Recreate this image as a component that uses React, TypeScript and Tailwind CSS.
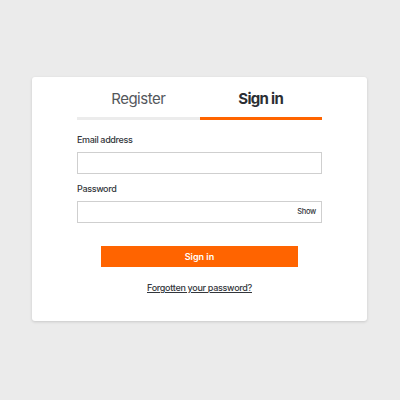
export default function App() {
  return (
    <div
      className="min-h-[400px] w-[400px] bg-[#ebebeb] pt-[77px] pl-[32px]"
      style={{ fontFamily: "Inter, 'Noto Sans', sans-serif" }}
    >
      <div className="flex h-[244px] w-[335px] flex-col rounded-[3px] bg-white px-[45px] pt-[12px] shadow-[0_1px_3px_rgba(0,0,0,0.15)]">
        {/* Tabs */}
        <div className="flex">
          <div className="flex-1 border-b-[3px] border-[#ececec] pb-[8px] text-center text-[15px] leading-[20px] tracking-[-0.5px] text-[#54575c]">
            Register
          </div>
          <div className="flex-1 border-b-[3px] border-[#ff6400] pb-[8px] text-center text-[15px] font-bold leading-[20px] tracking-[-0.7px] text-[#2b2e33]">
            Sign in
          </div>
        </div>

        {/* Email */}
        <label className="mt-[14px] text-[9px] font-medium leading-[12px] tracking-[-0.35px] text-[#33363b]">
          Email address
        </label>
        <div className="mt-[6px] h-[22px] border border-[#cfcfcf] bg-white" />

        {/* Password */}
        <label className="mt-[9px] text-[9px] font-medium leading-[12px] tracking-[-0.35px] text-[#33363b]">
          Password
        </label>
        <div className="mt-[6px] flex h-[22px] items-center justify-end border border-[#cfcfcf] bg-white pr-[5px]">
          <span className="text-[7.5px] font-medium tracking-[-0.3px] text-[#33363b]">Show</span>
        </div>

        {/* Submit */}
        <div className="mt-[23px] flex justify-center">
          <button className="flex h-[21px] w-[197px] items-center justify-center bg-[#ff6400] text-[9px] font-semibold text-white">
            Sign in
          </button>
        </div>

        <div className="mt-[15px] text-center text-[9px] leading-[12px]">
          <a className="font-medium tracking-[-0.3px] text-[#33363b] underline underline-offset-[1px]">
            Forgotten your password?
          </a>
        </div>
      </div>
    </div>
  );
}
